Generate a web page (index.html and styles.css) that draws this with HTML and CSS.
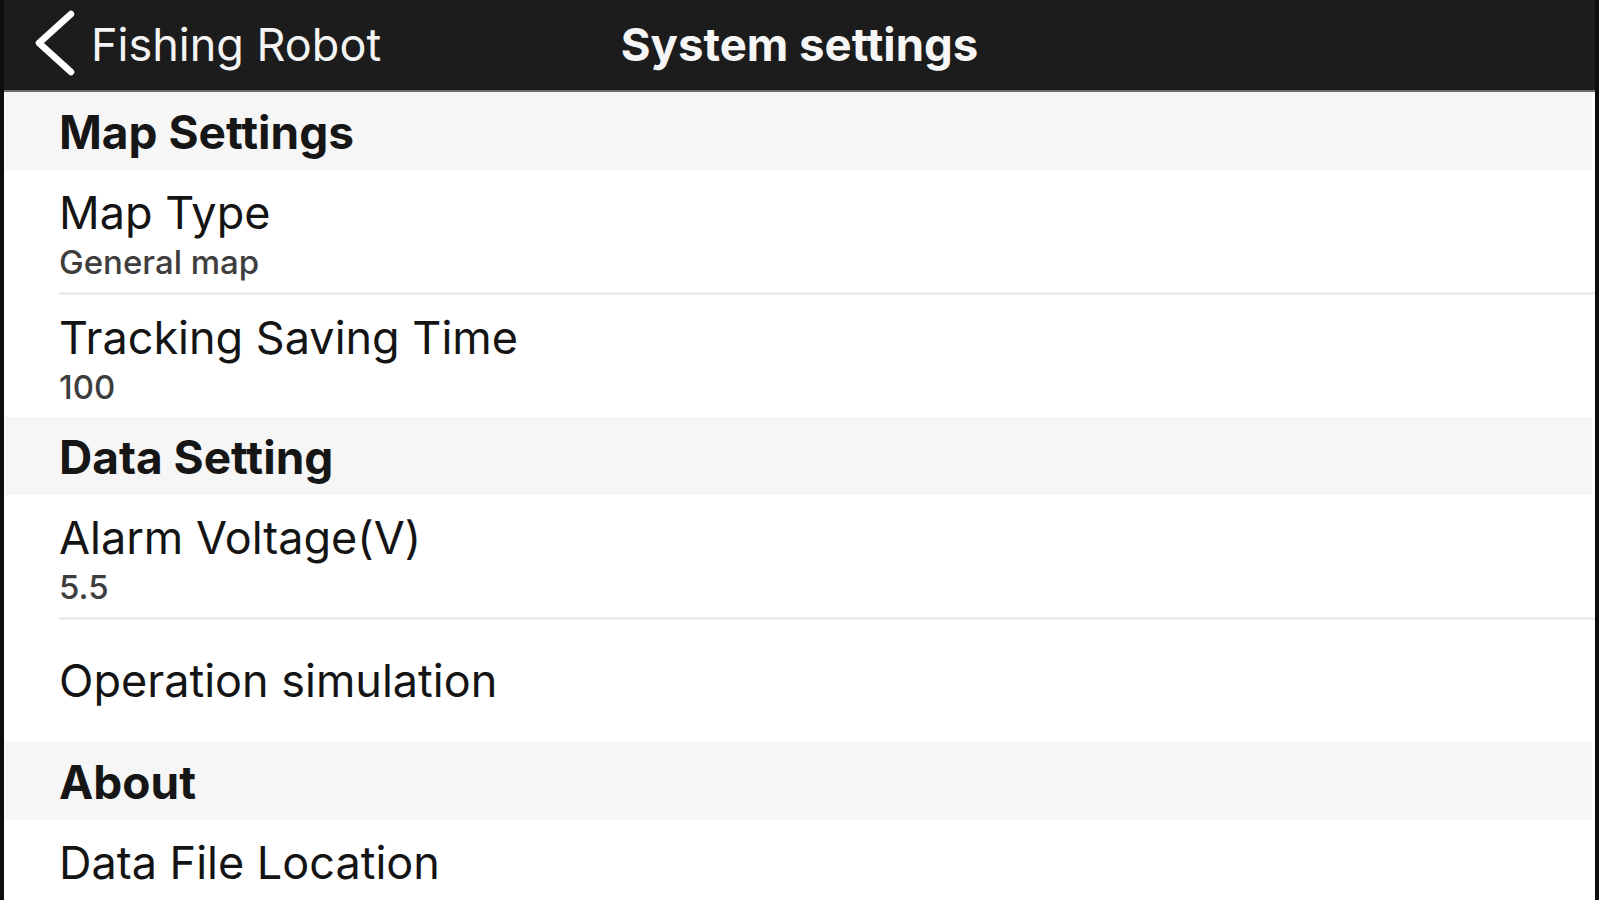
FILE: index.html
```html
<!DOCTYPE html>
<html lang="en">
<head>
<meta charset="utf-8">
<title>System settings</title>
<link rel="stylesheet" href="styles.css">
</head>
<body>
<div class="screen">
  <header class="nav">
    <div class="nav-back">
      <svg class="chev" width="42" height="66" viewBox="0 0 42 66" aria-hidden="true">
        <path d="M37 4 L5 33 L37 62" fill="none" stroke="#ffffff" stroke-width="6.5" stroke-linecap="round" stroke-linejoin="round"/>
      </svg>
      <span class="nav-back-label">Fishing Robot</span>
    </div>
    <h1 class="nav-title">System settings</h1>
    <div class="nav-spacer"></div>
  </header>
  <main class="list">
    <div class="section">Map Settings</div>
    <div class="row">
      <div class="row-title">Map Type</div>
      <div class="row-sub">General map</div>
    </div>
    <div class="divider"></div>
    <div class="row">
      <div class="row-title">Tracking Saving Time</div>
      <div class="row-sub">100</div>
    </div>
    <div class="section">Data Setting</div>
    <div class="row">
      <div class="row-title">Alarm Voltage(V)</div>
      <div class="row-sub">5.5</div>
    </div>
    <div class="divider"></div>
    <div class="row row--single">
      <div class="row-title">Operation simulation</div>
    </div>
    <div class="section">About</div>
    <div class="row">
      <div class="row-title">Data File Location</div>
    </div>
  </main>
</div>
</body>
</html>
```
FILE: styles.css
```css
html, body {
  margin: 0;
  padding: 0;
  height: 900px;
  overflow: hidden;
  background: #0d0d0d;
}

body {
  font-family: Inter, "Liberation Sans", Arial, sans-serif;
}

.screen {
  margin: 0 4px;
  height: 900px;
  background: #ffffff;
  overflow: hidden;
}

.nav {
  box-sizing: border-box;
  height: 92px;
  background: #1c1c1c;
  border-bottom: 2px solid #6e6e6e;
  display: grid;
  grid-template-columns: 1fr auto 1fr;
  align-items: center;
  color: #ffffff;
}

.nav-back {
  display: flex;
  align-items: center;
  gap: 15px;
  padding-left: 30px;
}

.chev {
  display: block;
  margin-top: -4px;
}

.nav-back-label {
  font-size: 45px;
  line-height: 90px;
  font-weight: 400;
  color: #f4f4f4;
}

.nav-title {
  margin: 0;
  font-size: 45.5px;
  line-height: 90px;
  font-weight: 700;
  color: #f6f6f6;
}

.list {
  display: flex;
  flex-direction: column;
}

.section {
  box-sizing: border-box;
  height: 78px;
  margin: 0 3px 0 1px;
  padding: 2px 0 0 54px;
  background: #f6f6f6;
  font-size: 46px;
  line-height: 76px;
  font-weight: 700;
  color: #161616;
}

.row {
  box-sizing: border-box;
  height: 122px;
  padding: 12px 0 0 55px;
  display: flex;
  flex-direction: column;
  justify-content: flex-start;
  background: #ffffff;
}

.row--single {
  padding-top: 0;
  justify-content: center;
}

.row-title {
  font-size: 45px;
  line-height: 62px;
  font-weight: 400;
  color: #141414;
}

.row-sub {
  font-size: 33px;
  line-height: 36px;
  font-weight: 500;
  color: #3e3e3e;
}

.divider {
  height: 3px;
  margin-left: 55px;
  background: #ececec;
}
```
